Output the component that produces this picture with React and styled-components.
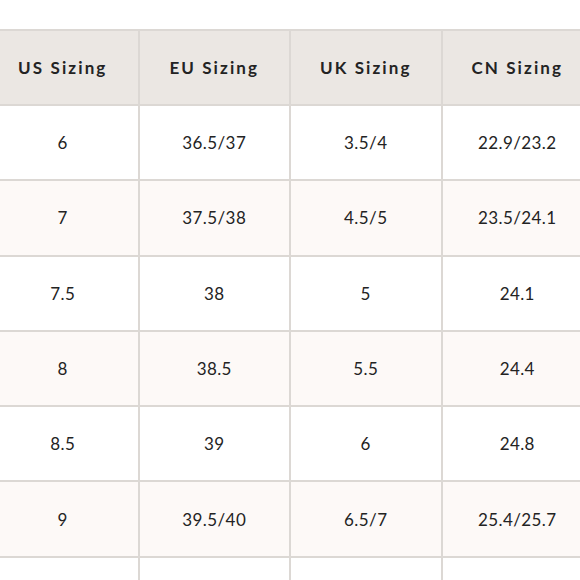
import React from 'react';
import styled, { createGlobalStyle } from 'styled-components';

const GlobalStyle = createGlobalStyle`
  html, body {
    margin: 0;
    padding: 0;
    background: #ffffff;
  }
  body {
    overflow: hidden;
  }
`;

const Page = styled.div`
  width: 580px;
  height: 580px;
  padding-top: 29px;
  box-sizing: border-box;
  overflow: hidden;
`;

const Table = styled.table`
  width: 608px;
  margin-left: -14px;
  border-collapse: collapse;
  table-layout: fixed;
  font-family: Lato, 'Open Sans', sans-serif;
  color: #232323;
`;

const HeadCell = styled.th`
  height: 73px;
  padding: 0;
  background: #ebe7e3;
  border: 2px solid #dcd8d4;
  font-size: 17px;
  font-weight: 700;
  letter-spacing: 2.1px;
  text-align: center;
  vertical-align: middle;
`;

const Row = styled.tr`
  background: ${(p) => (p.$shaded ? '#fdf9f7' : '#ffffff')};
`;

const Cell = styled.td`
  height: 73.3px;
  padding: 0;
  border: 2px solid #dcd8d4;
  font-size: 17px;
  font-weight: 400;
  letter-spacing: 0.4px;
  text-align: center;
  vertical-align: middle;
`;

const headers = ['US Sizing', 'EU Sizing', 'UK Sizing', 'CN Sizing'];

// last row only peeks in at the bottom edge, its values sit below the fold
const rows = [
  ['6', '36.5/37', '3.5/4', '22.9/23.2'],
  ['7', '37.5/38', '4.5/5', '23.5/24.1'],
  ['7.5', '38', '5', '24.1'],
  ['8', '38.5', '5.5', '24.4'],
  ['8.5', '39', '6', '24.8'],
  ['9', '39.5/40', '6.5/7', '25.4/25.7'],
  ['', '', '', ''],
];

const App = () => (
  <>
    <GlobalStyle />
    <Page>
      <Table>
        <thead>
          <tr>
            {headers.map((h) => (
              <HeadCell key={h}>{h}</HeadCell>
            ))}
          </tr>
        </thead>
        <tbody>
          {rows.map((r, i) => (
            <Row key={i} $shaded={i % 2 === 1}>
              {r.map((v, j) => (
                <Cell key={j}>{v}</Cell>
              ))}
            </Row>
          ))}
        </tbody>
      </Table>
    </Page>
  </>
);

export default App;
